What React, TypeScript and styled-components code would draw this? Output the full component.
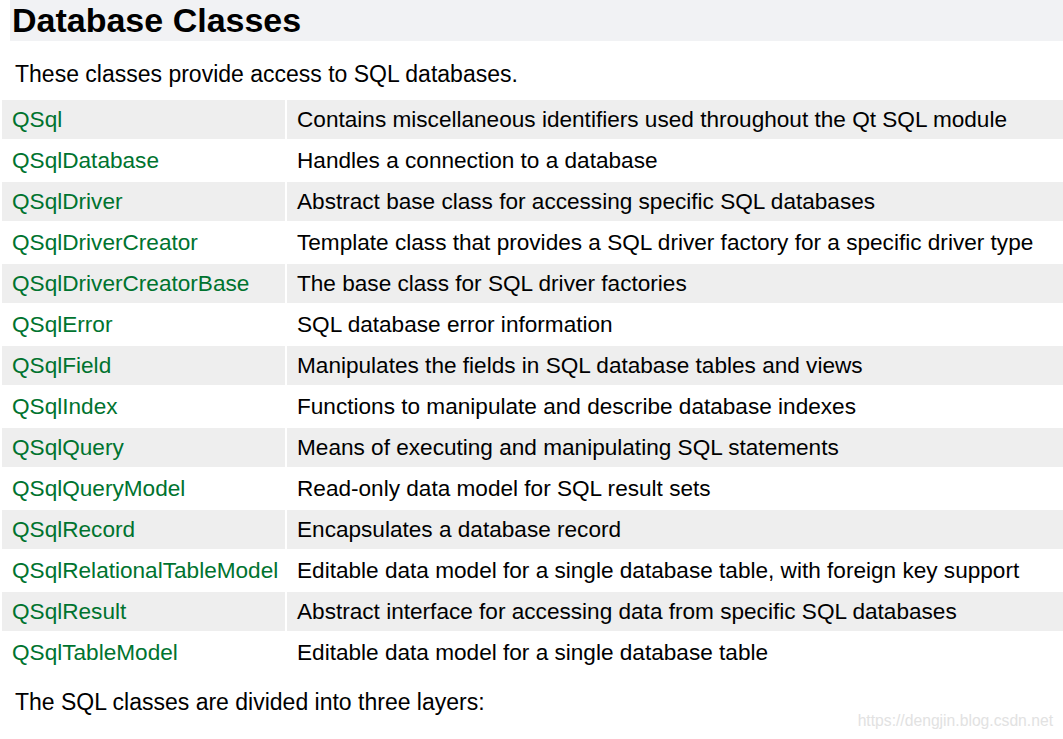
import React from "react";
import styled, { createGlobalStyle } from "styled-components";

const Global = createGlobalStyle`
  html, body { margin: 0; padding: 0; background: #ffffff; }
  body { font-family: "Liberation Sans", Arial, sans-serif; color: #000; }
`;

const Page = styled.div`
  position: relative;
  width: 1063px;
  height: 739px;
  overflow: hidden;
`;

const Heading = styled.h2`
  margin: 0 0 0 10px;
  height: 41px;
  background: #f1f2f4;
  font-size: 34px;
  font-weight: bold;
  line-height: 40px;
  padding-left: 2px;
`;

const Para = styled.p<{ $top: number }>`
  margin: ${(p) => p.$top}px 0 0 15px;
  font-size: 23px;
  line-height: 28px;
`;

const Table = styled.table`
  border-collapse: separate;
  border-spacing: 2px;
  table-layout: fixed;
  margin-top: 10px;
  width: 1067px;
  font-size: 22.6px;
`;

const Row = styled.tr<{ $odd: boolean }>`
  background: ${(p) => (p.$odd ? "#eeeeee" : "#ffffff")};
`;

const Cell = styled.td`
  height: 39px;
  padding: 0 10px;
  vertical-align: middle;
  white-space: nowrap;
  overflow: visible;
  line-height: 28px;
`;

const NameCell = styled(Cell)`
  width: 263px;
`;

const Link = styled.a`
  color: #00732f;
  text-decoration: none;
`;

const Watermark = styled.div`
  position: absolute;
  right: 10px;
  bottom: 9px;
  font-size: 15.7px;
  color: #e2e2e2;
`;

const rows: [string, string][] = [
  ["QSql", "Contains miscellaneous identifiers used throughout the Qt SQL module"],
  ["QSqlDatabase", "Handles a connection to a database"],
  ["QSqlDriver", "Abstract base class for accessing specific SQL databases"],
  ["QSqlDriverCreator", "Template class that provides a SQL driver factory for a specific driver type"],
  ["QSqlDriverCreatorBase", "The base class for SQL driver factories"],
  ["QSqlError", "SQL database error information"],
  ["QSqlField", "Manipulates the fields in SQL database tables and views"],
  ["QSqlIndex", "Functions to manipulate and describe database indexes"],
  ["QSqlQuery", "Means of executing and manipulating SQL statements"],
  ["QSqlQueryModel", "Read-only data model for SQL result sets"],
  ["QSqlRecord", "Encapsulates a database record"],
  ["QSqlRelationalTableModel", "Editable data model for a single database table, with foreign key support"],
  ["QSqlResult", "Abstract interface for accessing data from specific SQL databases"],
  ["QSqlTableModel", "Editable data model for a single database table"],
];

export default function App() {
  return (
    <Page>
      <Global />
      <Heading>Database Classes</Heading>
      <Para $top={19}>These classes provide access to SQL databases.</Para>
      <Table>
        <tbody>
          {rows.map(([name, desc], i) => (
            <Row key={name} $odd={i % 2 === 0}>
              <NameCell>
                <Link href="#">{name}</Link>
              </NameCell>
              <Cell>{desc}</Cell>
            </Row>
          ))}
        </tbody>
      </Table>
      <Para $top={14}>The SQL classes are divided into three layers:</Para>
      <Watermark>https://dengjin.blog.csdn.net</Watermark>
    </Page>
  );
}
